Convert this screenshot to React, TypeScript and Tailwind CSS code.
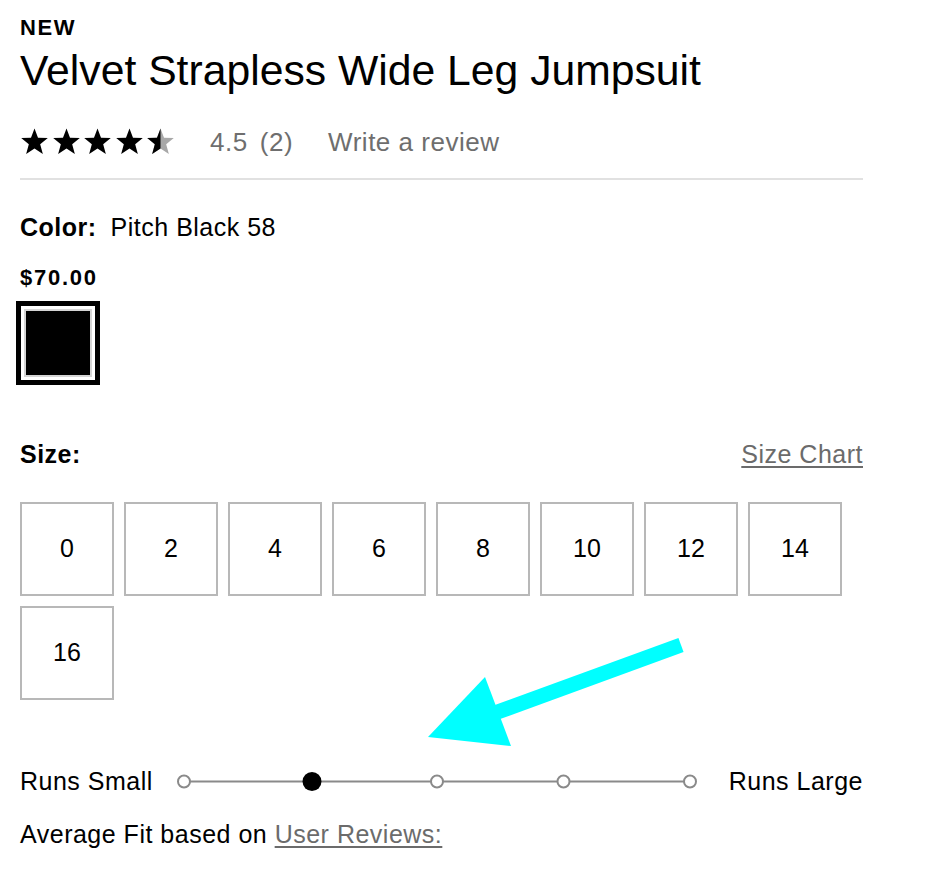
const SIZES = ["0", "2", "4", "6", "8", "10", "12", "14", "16"];

function Star({ fill = "full" }: { fill?: "full" | "half" }) {
  const pts = "12,1.2 14.9,8.9 23,9.2 16.7,14.3 18.9,22.4 12,17.8 5.1,22.4 7.3,14.3 1,9.2 9.1,8.9";
  return (
    <svg width="29" height="29" viewBox="0 0 24 24" className="shrink-0">
      {fill === "half" ? (
        <>
          <defs>
            <clipPath id="half-star">
              <rect x="0" y="0" width="12" height="24" />
            </clipPath>
          </defs>
          <polygon points={pts} fill="#a8a8a8" />
          <polygon points={pts} fill="#000" clipPath="url(#half-star)" />
        </>
      ) : (
        <polygon points={pts} fill="#000" />
      )}
    </svg>
  );
}

// fit scale: 5 stops, second one is the average
function FitScale() {
  const xs = [7, 133.5, 260, 386.5, 513];
  return (
    <svg width="520" height="25" viewBox="0 0 520 25" className="ml-[24px] shrink-0">
      <line x1="7" y1="12.5" x2="513" y2="12.5" stroke="#8a8a8a" strokeWidth="2" />
      {xs.map((x, i) =>
        i === 1 ? (
          <circle key={i} cx={x + 1.5} cy="12.5" r="9.5" fill="#000" />
        ) : (
          <circle key={i} cx={x} cy="12.5" r="6" fill="#fff" stroke="#8a8a8a" strokeWidth="2" />
        ),
      )}
    </svg>
  );
}

export default function App() {
  return (
    <div className="relative min-h-[882px] w-[932px] bg-white font-['Liberation_Sans',Arial,sans-serif] text-black">
      <div className="ml-[20px] w-[843px] pt-[17px]">
        <div className="text-[22px] font-bold leading-none tracking-[0.07em]">NEW</div>
        <h1 className="mt-[10px] text-[42.7px] leading-none">Velvet Strapless Wide Leg Jumpsuit</h1>

        <div className="mt-[37px] flex h-[26px] items-center text-[26px] leading-none tracking-[0.02em] text-[#6e6e6e]">
          <div className="flex items-center gap-[2.5px]">
            <Star />
            <Star />
            <Star />
            <Star />
            <Star fill="half" />
          </div>
          <span className="ml-[35px]">4.5</span>
          <span className="ml-[12px]">(2)</span>
          <span className="ml-[35px]">Write a review</span>
        </div>

        <div className="mt-[23px] h-[2px] bg-[#e1e1e1]" />

        <div className="mt-[35px] text-[25px] leading-none tracking-[0.02em]">
          <span className="font-bold">Color:</span>
          <span className="ml-[14px]">Pitch Black 58</span>
        </div>

        <div className="mt-[27px] text-[22px] font-bold leading-none tracking-[0.08em]">$70.00</div>

        <div className="-ml-[4px] mt-[12px] h-[84px] w-[84px] border-[5px] border-black bg-white p-[3px]">
          <div className="h-full w-full border-2 border-[#d4d4d4] bg-black" />
        </div>

        <div className="mt-[57px] flex items-baseline justify-between text-[25px] leading-none tracking-[0.02em]">
          <span className="font-bold">Size:</span>
          <a href="#" className="text-[#6b6b6b] underline underline-offset-[3px]">
            Size Chart
          </a>
        </div>

        <div className="mt-[35px] flex flex-wrap gap-[10px]">
          {SIZES.map((s) => (
            <button
              key={s}
              className="flex h-[94px] w-[94px] items-center justify-center border-2 border-[#b8b8b8] bg-white text-[25px] leading-none"
            >
              {s}
            </button>
          ))}
        </div>

        <div className="mt-[69px] flex h-[25px] items-center text-[25px] leading-none tracking-[0.02em]">
          <span>Runs Small</span>
          <FitScale />
          <span className="ml-auto">Runs Large</span>
        </div>

        <div className="mt-[28px] text-[25px] leading-none tracking-[0.02em]">
          Average Fit based on{" "}
          <a href="#" className="text-[#6b6b6b] underline underline-offset-[3px]">
            User Reviews:
          </a>
        </div>
      </div>

      {/* annotation arrow drawn over the page */}
      <svg
        className="pointer-events-none absolute left-0 top-0"
        width="932"
        height="882"
        viewBox="0 0 932 882"
      >
        <line x1="681" y1="645" x2="492" y2="714" stroke="#00ffff" strokeWidth="15" />
        <polygon points="428,737 485,677 511,746" fill="#00ffff" />
      </svg>
    </div>
  );
}
